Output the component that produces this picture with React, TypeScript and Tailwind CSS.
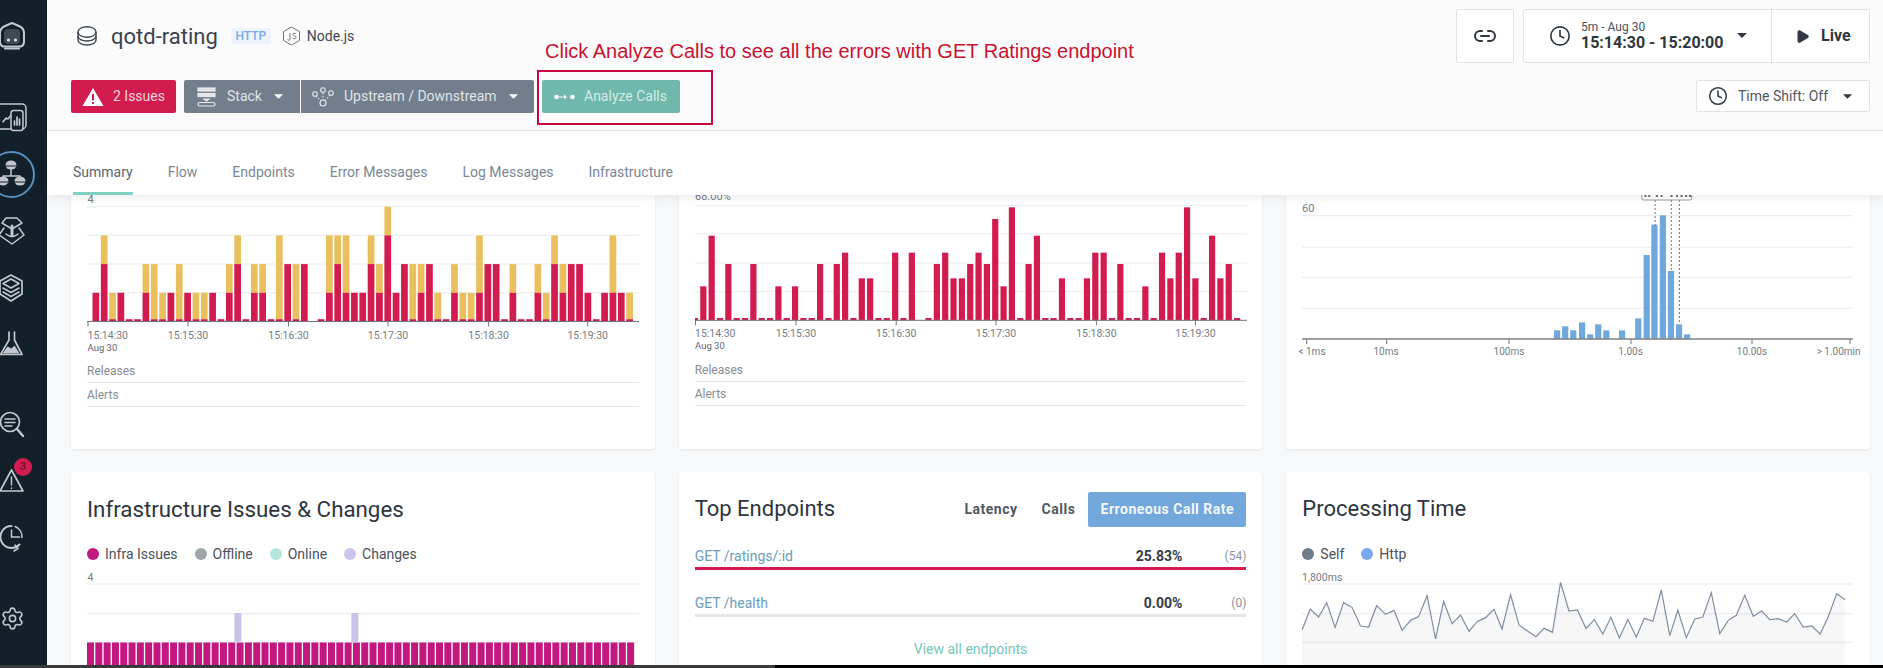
import React from "react";
import { Clock, Link2, Play, Settings } from "lucide-react";

const RED = "#d21c50";
const YEL = "#e9c05d";
const GRID = "#e9ebed";
const LABEL = "#757d86";

// chart 1 : [red, total] in grid units, 0.08 = the thin stub
const s = 0.08;
const errs: [number, number][] = [
  [1,1],[2,3],[s,1],[1,1],[s,s],[s,s],[1,2],[s,2],[s,1],[1,1],[s,2],[1,1],[s,1],[s,1],[1,1],[s,s],[1,2],[2,3],[s,s],[1,2],[1,2],[s,s],[s,3],[2,2],[s,2],[2,2],[0,0],[s,s],[1,3],[2,3],[1,3],[1,1],[1,1],[2,3],[1,2],[3,4],[1,1],[2,2],[s,2],[1,2],[2,2],[s,1],[s,s],[1,2],[s,1],[s,1],[1,3],[2,2],[2,2],[s,s],[1,2],[s,s],[s,s],[1,2],[s,1],[2,3],[1,2],[2,2],[2,2],[1,1],[s,s],[1,1],[1,3],[1,1],[s,1],
];
// chart 2 : bar top in page px, 0 = stub, -1 = none
const T = (z: number) => 190 + z / 3;
const rate = [0,289,137,0,222,0,0,222,0,0,289,0,289,0,0,222,0,222,188,0,265,265,0,0,188,0,188,-1,0,222,188,265,265,222,188,222,87,289,52,0,222,137,0,0,265,0,0,265,188,188,0,222,0,0,289,0,188,265,188,52,265,0,137,265,222,0];
// chart 3 : latency histogram [zoom x, zoom top]
const hist: [number, number][] = [[715,451],[736,439],[757,451],[780,427],[801,463],[822,433],[843,451],[884,451],[926,415],[948,225],[968,134],[990,106],[1011,273],[1032,433],[1053,463]];
const line: [number, number][] = [[60,510],[81,447],[103,471],[124,428],[146,502],[168,428],[190,442],[212,498],[233,501],[254,437],[277,463],[299,451],[320,511],[342,481],[363,470],[385,407],[407,537],[428,424],[450,491],[472,465],[494,514],[515,485],[537,473],[559,448],[580,507],[602,404],[624,495],[646,513],[668,530],[689,505],[711,517],[732,367],[754,453],[776,450],[798,505],[820,479],[842,522],[863,472],[885,534],[907,478],[929,531],[950,475],[972,484],[994,390],[1016,527],[1037,450],[1059,533],[1081,477],[1102,471],[1124,398],[1146,521],[1168,481],[1189,466],[1211,406],[1233,469],[1255,453],[1276,479],[1298,476],[1320,486],[1341,461],[1363,501],[1385,498],[1407,522],[1428,470],[1450,401],[1472,419]];

function Caret({ color = "#fff", w = 9 }: { color?: string; w?: number }) {
  return (
    <svg width={w} height={5} viewBox="0 0 10 5" className="shrink-0">
      <path d="M0 0h10L5 5z" fill={color} />
    </svg>
  );
}

function TimeAxis({ ticks, y, left }: { ticks: number[]; y: number; left: number }) {
  const labels = ["15:14:30", "15:15:30", "15:16:30", "15:17:30", "15:18:30", "15:19:30"];
  return (
    <g fontSize="10.5" fill={LABEL}>
      {ticks.map((t, i) => (
        <g key={t}>
          <line x1={t} x2={t} y1={y} y2={y + 5} stroke="#6f757b" strokeWidth="1" />
          <text x={i === 0 ? left : t} y={y + 17} textAnchor={i === 0 ? "start" : "middle"}>{labels[i]}</text>
        </g>
      ))}
      <text x={left} y={y + 29} fontSize="9.5" fill="#5f666e">Aug 30</text>
    </g>
  );
}

function ErrorsChart() {
  const axis = 321.5;
  const u = 28.7;
  return (
    <svg width={552} height={164} viewBox="87 195 552 164" className="block">
      <text x="87.5" y="203" fontSize="11" fill={LABEL}>4</text>
      {[206.7, 235.2, 264, 292.7].map((y) => (
        <line key={y} x1="87" x2="639" y1={y} y2={y} stroke={GRID} />
      ))}
      {errs.map(([r, t], i) => {
        const x = 92.5 + i * 8.34;
        return (
          <g key={i}>
            <rect x={x} width="6.7" y={axis - t * u} height={(t - r) * u} fill={YEL} />
            <rect x={x} width="6.7" y={axis - r * u} height={r * u} fill={RED} />
          </g>
        );
      })}
      <line x1="87" x2="639" y1={axis} y2={axis} stroke="#6f757b" />
      <TimeAxis ticks={[88, 188, 288.5, 388, 488.6, 587.7]} y={axis} left={87.5} />
    </svg>
  );
}

function RateChart() {
  const axis = 320.3;
  return (
    <svg width={552} height={163} viewBox="695 195 552 163" className="block">
      <text x="695" y="200" fontSize="11" fill={LABEL}>68.00%</text>
      {[205.3, 234, 263, 291.7].map((y) => (
        <line key={y} x1="695" x2="1247" y1={y} y2={y} stroke={GRID} />
      ))}
      {rate.map((v, i) => {
        if (v < 0) return null;
        const x = 691.9 + i * 8.34;
        const top = v === 0 ? axis - 2.3 : T(v);
        const lx = Math.max(x, 695);
        return <rect key={i} x={lx} width={x + 6.2 - lx} y={top} height={axis - top} fill={RED} />;
      })}
      <line x1="695" x2="1247" y1={axis} y2={axis} stroke="#6f757b" />
      <TimeAxis ticks={[695.5, 796, 896.2, 996, 1096.4, 1195.5]} y={axis} left={695} />
    </svg>
  );
}

function LatencyChart() {
  const axis = 339;
  const X = (z: number) => 1280 + z / 2.6;
  const Y = (z: number) => 180 + z / 3;
  const ticks: [number, number, string][] = [
    [1307.7, 1313, "< 1ms"], [1387.7, 1387, "10ms"], [1510, 1510, "100ms"],
    [1632, 1631.5, "1.00s"], [1753, 1753, "10.00s"], [1851, 1839.6, "> 1.00min"],
  ];
  return (
    <svg width={552} height={170} viewBox="1303 195 552 170" className="block overflow-visible">
      <text x="1303" y="212" fontSize="11" fill={LABEL}>60</text>
      {[215.7, 247.3, 277.3, 308.3].map((y) => (
        <line key={y} x1="1303" x2="1854" y1={y} y2={y} stroke={GRID} />
      ))}
      {hist.map(([z, t]) => (
        <rect key={z} x={X(z)} width="6.2" y={Y(t)} height={axis - Y(t)} fill="#6fa8dc" />
      ))}
      {[978, 1020, 1041].map((z) => (
        <line key={z} x1={X(z)} x2={X(z)} y1="200" y2={z === 978 ? 226 : z === 1020 ? 270 : 322} stroke="#6f757b" strokeDasharray="2 2" />
      ))}
      <rect x={X(943)} y="185" width={(1073 - 943) / 2.6} height="15" rx="2" fill="#fff" stroke="#9aa1a8" />
      {[950, 960, 980, 992, 1018, 1032, 1044, 1056, 1066].map((z) => (
        <rect key={z} x={X(z)} y="195" width="2" height="2" fill="#6a7178" />
      ))}
      <line x1="1303" x2="1854" y1={axis} y2={axis} stroke="#7d8287" strokeWidth="1.6" />
      {ticks.map(([x, lx, l]) => (
        <g key={l}>
          <line x1={x} x2={x} y1={axis} y2={axis + 5} stroke="#6f757b" />
          <text x={lx} y={axis + 16} textAnchor="middle" fontSize="10" fill={LABEL}>{l}</text>
        </g>
      ))}
    </svg>
  );
}

function InfraChart() {
  return (
    <svg width={552} height={101} viewBox="87 564 552 101" className="block">
      <text x="87.5" y="580.5" fontSize="10.5" fill={LABEL}>4</text>
      {[584, 613.7, 642.3].map((y) => (
        <line key={y} x1="87" x2="639" y1={y} y2={y} stroke={GRID} />
      ))}
      {Array.from({ length: 66 }).map((_, i) => (
        <rect key={i} x={87 + i * 8.31} width="7" y="642.5" height="23" fill="#c2187f" />
      ))}
      <rect x="234.4" y="613" width="7" height="29.5" fill="#cdc3ea" />
      <rect x="351.4" y="613" width="7" height="29.5" fill="#cdc3ea" />
    </svg>
  );
}

function TimeChart() {
  const pts = line.map(([x, y]) => [1280 + x / 2.6, 460 + y / 3]);
  const p = pts.map((a) => a.join(",")).join(" ");
  return (
    <svg width={552} height={101} viewBox="1303 564 552 101" className="block">
      <text x="1303" y="580.5" fontSize="10.5" fill={LABEL}>1,800ms</text>
      {[584, 613.7, 642.3].map((y) => (
        <line key={y} x1="1303" x2="1854" y1={y} y2={y} stroke={GRID} />
      ))}
      <polygon points={`1303,665 ${p} ${pts[pts.length - 1][0]},665`} fill="#6f7c8c" fillOpacity="0.06" />
      <polyline points={p} fill="none" stroke="#7f8ea3" strokeWidth="1.2" />
    </svg>
  );
}

function Legend({ items }: { items: [string, string][] }) {
  return (
    <div className="flex items-center gap-[17px] h-[20px] text-[14px] text-[#4a525b]">
      {items.map(([c, l]) => (
        <div key={l} className="flex items-center gap-[6px]">
          <span className="w-[12px] h-[12px] rounded-full" style={{ background: c }} />
          <span>{l}</span>
        </div>
      ))}
    </div>
  );
}

function Rows() {
  return (
    <div className="text-[12px] text-[#858d96]">
      <div className="h-[24px] flex items-center border-b border-[#e3e6ea]">Releases</div>
      <div className="h-[24px] flex items-center border-b border-[#e3e6ea]">Alerts</div>
    </div>
  );
}

function Ep({ name, pct, n, bar, mt }: { name: string; pct: string; n: string; bar: string; mt: string }) {
  return (
    <div className={mt}>
      <div className="flex items-center h-[20px] text-[14px]">
        <span className="text-[#6a9dba]">{name}</span>
        <span className="ml-auto font-bold text-[#333b45]">{pct}</span>
        <span className="w-[64px] text-right text-[12px] text-[#8d949c]">{n}</span>
      </div>
      <div className={`h-[3px] mt-[1px] ${bar}`} />
    </div>
  );
}

const stroke = { fill: "none", stroke: "#c2c8cd", strokeWidth: 1.5, strokeLinejoin: "round" as const, strokeLinecap: "round" as const };
const LIGHT = "#c2c8cd";
const DARK = "#12202a";

function NavIcon({ children, mt = "" }: { children: React.ReactNode; mt?: string }) {
  return (
    <div className={`w-[24px] h-[36px] flex justify-center ${mt}`}>
      <svg width="36" height="36" viewBox="0 0 36 36" className="shrink-0 -mx-[6px]">
        <g {...stroke}>{children}</g>
      </svg>
    </div>
  );
}

export default function App() {
  return (
    <div className="w-[1883px] h-[668px] overflow-hidden flex flex-col bg-black font-['Roboto',sans-serif]">
      <div className="flex flex-1 min-h-0">
        <aside className="w-[47px] shrink-0 bg-[#12202a] pt-[18px] flex flex-col overflow-hidden relative">
          <NavIcon>
            <path d="M18 5l8 3.500q4 2 4 7V24q0 3-3 4.500H9Q6 27 6 24v-8.500q0-5 4-7z" strokeWidth="2" />
            <rect x="10" y="11" width="16" height="15" rx="4" fill="#3f4b54" stroke="none" />
            <circle cx="14.500" cy="22" r="1.600" fill="#dfe3e6" stroke="none" />
            <circle cx="21.500" cy="22" r="1.600" fill="#dfe3e6" stroke="none" />
            <path d="M11 30.500h14" strokeWidth="2" />
          </NavIcon>
          <NavIcon mt="mt-[46px]">
            <rect x="0" y="4" width="32" height="25" rx="4" />
            <path d="M9 22l3-4 2 1 3-4" />
            <rect x="17" y="10.500" width="12" height="20" rx="2.500" fill={DARK} />
            <path d="M20.500 25v-4M23 25v-8M25.500 25v-6" strokeWidth="1.700" />
          </NavIcon>
          <div className="relative mt-[21px]">
            <div className="absolute left-[-12px] top-[-6px] w-[47px] h-[47px] rounded-full border-[2.500px] border-[#5a8fc0]" />
            <NavIcon>
              <path d="M17 12v7M17 19H9v3M17 19h9v3" />
              <ellipse cx="17" cy="8" rx="5.500" ry="4.500" fill={LIGHT} stroke="none" />
              <ellipse cx="9" cy="24" rx="5.500" ry="4.500" fill={LIGHT} stroke="none" />
              <ellipse cx="26" cy="24" rx="5.500" ry="4.500" fill={LIGHT} stroke="none" />
              <path d="M11.500 9h11M3.500 25h11M20.500 25h11" stroke={DARK} strokeWidth="1" />
            </NavIcon>
          </div>
          <NavIcon mt="mt-[21px]">
            <path d="M12 4h11l5 5-10 6L8 9z" />
            <path d="M10 14l-5 7 13 9 12-9-5-7" />
            <path d="M18 12v9" strokeWidth="3" />
            <path d="M12 20q6 5 12 0" />
          </NavIcon>
          <NavIcon mt="mt-[20px]">
            <path d="M17 5l11 6v13l-11 7-11-7V11z" strokeWidth="1.700" />
            <path d="M17 9l8 4.500-8 4.500-8-4.500z" />
            <path d="M9 18l8 4.500 8-4.500M9 22l8 4.500 8-4.500" />
          </NavIcon>
          <NavIcon mt="mt-[19px]">
            <path d="M15 7v8L6.500 29.500H28L20.500 15V7" strokeWidth="1.700" />
            <path d="M8.500 28.500l5-7 4 2 3-3 5 8z" fill={LIGHT} stroke="none" />
          </NavIcon>
          <NavIcon mt="mt-[43px]">
            <circle cx="16" cy="18" r="9.500" strokeWidth="1.700" />
            <path d="M11 15h10M11 18.500h10M11 22h7" />
            <path d="M23 25l6 7" strokeWidth="2.400" />
          </NavIcon>
          <div className="relative mt-[22px]">
            <NavIcon>
              <path d="M17.500 8L29 29H6z" strokeWidth="1.700" />
              <path d="M17.500 15v8M17.500 26v.5" />
            </NavIcon>
            <div className="absolute left-[14px] top-[-4px] w-[18px] h-[18px] rounded-full bg-[#d21c50] text-[11px] font-bold text-[#7a1230] flex items-center justify-center">3</div>
          </div>
          <NavIcon mt="mt-[21px]">
            <path d="M17.500 7a11 11 0 1 0 8 18.500" strokeWidth="2" />
            <path d="M21 7.500a11 11 0 0 1 7 11" />
            <path d="M17.500 18h8" strokeWidth="1.500" />
            <path d="M17.500 18v-7" strokeWidth="1.500" />
            <path d="M20 32l4-2.500-3-3.500" />
          </NavIcon>
          <div className="mt-[45px] w-[24px] h-[36px] flex items-center justify-center">
            <Settings size={25} strokeWidth={1.5} color="#c2c8cd" className="shrink-0" />
          </div>
        </aside>

        <div className="flex-1 min-w-0 flex flex-col relative">
          {/* annotation over the page */}
          <div className="absolute left-[498px] top-[39px] z-20 text-[20px] leading-[24px] text-[#c9112f] font-['Liberation_Sans',sans-serif] whitespace-nowrap">
            Click Analyze Calls to see all the errors with GET Ratings endpoint
          </div>
          <div className="absolute left-[490px] top-[70px] z-20 w-[176px] h-[55px] border-2 border-[#c8073f]" />

          <header className="h-[131px] shrink-0 bg-[#fbfbfc] border-b border-[#e6e8eb] flex justify-between pl-[24px] pr-[13px]">
            <div className="flex flex-col">
              <div className="flex items-center h-[40px] mt-[16px] pl-[6px]">
                <svg width="20" height="20" viewBox="0 0 20 20" fill="none" stroke="#3b444e" strokeWidth="1.4">
                  <ellipse cx="10" cy="6" rx="9" ry="5.300" />
                  <path d="M1 6v8c0 3 4 5 9 5s9-2 9-5V6" />
                  <path d="M1 10c0 3 4 5 9 5s9-2 9-5" />
                </svg>
                <span className="ml-[14px] text-[22px] text-[#39424c]">qotd-rating</span>
                <span className="ml-[13px] h-[16px] w-[40px] rounded-[2px] bg-[#eef4fd] text-[#7aa7ee] text-[12px] font-medium flex items-center justify-center">HTTP</span>
                <svg width="19" height="20" viewBox="0 0 19 20" fill="none" stroke="#6d7680" strokeWidth="1" className="ml-[11px]">
                  <path d="M9.500 1l8 4.500v9l-8 4.500-8-4.500v-9z" />
                  <path d="M8 7v6c0 1.500-2 1.500-2.500.5M14 8c-.7-1.200-3.200-1-3 .6.2 1.400 3.200 1 3 3-.2 1.500-2.800 1.500-3.300.2" />
                </svg>
                <span className="ml-[6px] text-[14px] text-[#3f4852]">Node.js</span>
              </div>
              <div className="flex items-center h-[33px] mt-[24px] text-[14px] leading-[35px]">
                <div className="w-[105px] h-full bg-[#d21c50] rounded-[2px] flex items-center pl-[11px] gap-[9px] text-[#f6d3dd]">
                  <svg width="22" height="20" viewBox="0 0 22 20">
                    <path d="M11 1l10.500 18H.5z" fill="#fff" />
                    <rect x="10" y="7" width="2" height="6.500" fill="#d21c50" />
                    <rect x="10" y="15" width="2" height="2" fill="#d21c50" />
                  </svg>
                  <span>2 Issues</span>
                </div>
                <div className="ml-[8px] w-[116px] h-full bg-[#737e8c] rounded-l-[2px] flex items-center pl-[13px] text-[#dfe3e7]">
                  <svg width="19" height="20" viewBox="0 0 19 20" fill="none" stroke="#e4e7ea" strokeWidth="1.200">
                    <rect x="1" y="1" width="17" height="3" fill="#e4e7ea" />
                    <rect x="1" y="6.500" width="17" height="3" fill="#e4e7ea" />
                    <path d="M7 12h5l-2.500 2z" fill="#e4e7ea" />
                    <rect x="1" y="15.500" width="17" height="3.500" rx="1.700" />
                  </svg>
                  <span className="ml-[11px]">Stack</span>
                  <span className="ml-[12px]"><Caret /></span>
                </div>
                <div className="ml-[1px] w-[233px] h-full bg-[#737e8c] rounded-r-[2px] flex items-center pl-[11px] text-[#dfe3e7]">
                  <svg width="22" height="20" viewBox="0 0 22 20" fill="none" stroke="#e4e7ea" strokeWidth="1.100">
                    <circle cx="3" cy="7" r="2.300" />
                    <circle cx="11" cy="3" r="2.300" />
                    <circle cx="19" cy="6" r="2.300" />
                    <circle cx="11" cy="16" r="3" />
                    <path d="M4 9l5 5M11 6v7M18 8l-5 6" strokeDasharray="1.500 1.500" />
                  </svg>
                  <span className="ml-[10px]">Upstream / Downstream</span>
                  <span className="ml-[12px]"><Caret /></span>
                </div>
                <div className="ml-[8px] w-[138px] h-full bg-[#6fb8ab] rounded-[2px] flex items-center pl-[12px] text-[#d3ebe6]">
                  <svg width="21" height="8" viewBox="0 0 21 8" fill="#fff">
                    <circle cx="2.500" cy="4" r="2.300" />
                    <circle cx="18.500" cy="4" r="2.300" />
                    <path d="M5 3.400h5V1.500l3 2.500-3 2.500V4.600H5z" />
                  </svg>
                  <span className="ml-[9px]">Analyze Calls</span>
                </div>
              </div>
            </div>
            <div className="flex flex-col items-end pt-[9px]">
              <div className="flex h-[54px]">
                <div className="w-[58px] h-full bg-white border border-[#e1e4e7] rounded-[2px] flex items-center justify-center">
                  <Link2 size={24} strokeWidth={2} color="#2f3740" />
                </div>
                <div className="ml-[9px] w-[249px] h-full bg-white border border-[#e1e4e7] rounded-l-[2px] flex items-center pl-[25px]">
                  <Clock size={22} strokeWidth={1.800} color="#2f3740" className="shrink-0" />
                  <div className="ml-[10px] flex flex-col">
                    <span className="text-[12px] leading-[14px] text-[#4a525b]">5m - Aug 30</span>
                    <span className="text-[16px] leading-[18px] font-bold text-[#2f3740] whitespace-nowrap">15:14:30 - 15:20:00</span>
                  </div>
                  <span className="ml-[14px] mb-[2px]"><Caret color="#2f3740" w={10} /></span>
                </div>
                <div className="w-[98px] h-full bg-white border border-l-0 border-[#e1e4e7] rounded-r-[2px] flex items-center pl-[23px]">
                  <Play size={15} fill="#2f3740" color="#2f3740" />
                  <span className="ml-[11px] text-[16px] font-bold text-[#2f3740]">Live</span>
                </div>
              </div>
              <div className="mt-[17px] w-[174px] h-[32px] bg-white border border-[#e1e4e7] rounded-[2px] flex items-center pl-[11px]">
                <Clock size={20} strokeWidth={1.800} color="#2f3740" className="shrink-0" />
                <span className="ml-[10px] text-[14px] text-[#50585f] whitespace-nowrap">Time Shift: Off</span>
                <span className="ml-[15px]"><Caret color="#2f3740" w={9} /></span>
              </div>
            </div>
          </header>

          <nav className="relative z-10 h-[64px] shrink-0 bg-white shadow-[0_3px_10px_rgba(0,0,0,0.07)] pl-[26px] flex gap-[35px] text-[14px] text-[#7b8794]">
            <div className="h-full flex items-center pt-[21px] border-b-[3px] border-[#7fd1c4] text-[#5b6672]">Summary</div>
            {["Flow", "Endpoints", "Error Messages", "Log Messages", "Infrastructure"].map((t) => (
              <div key={t} className="h-full flex items-center pt-[21px] border-b-[3px] border-transparent">{t}</div>
            ))}
          </nav>

          <main className="flex-1 min-h-0 overflow-hidden bg-[#f7f8fa] pl-[24px] pr-[13px] grid grid-cols-3 gap-x-[24px] gap-y-[23px] grid-rows-[254px_1fr]">
            <section className="bg-white rounded-b-[4px] shadow-[0_1px_3px_rgba(0,0,0,0.08)] px-[16px]">
              <ErrorsChart />
              <Rows />
            </section>
            <section className="bg-white rounded-b-[4px] shadow-[0_1px_3px_rgba(0,0,0,0.08)] px-[16px]">
              <RateChart />
              <Rows />
            </section>
            <section className="bg-white rounded-b-[4px] shadow-[0_1px_3px_rgba(0,0,0,0.08)] px-[16px] overflow-hidden">
              <LatencyChart />
            </section>

            <section className="bg-white rounded-t-[4px] shadow-[0_1px_3px_rgba(0,0,0,0.08)] px-[16px] overflow-hidden">
              <h2 className="pt-[22px] h-[72px] text-[22.300px] leading-[30px] font-normal text-[#2d3540] whitespace-nowrap">Infrastructure Issues &amp; Changes</h2>
              <Legend items={[["#c2187f", "Infra Issues"], ["#9fa6a8", "Offline"], ["#b5e5dc", "Online"], ["#cdc3ea", "Changes"]]} />
              <InfraChart />
            </section>
            <section className="bg-white rounded-t-[4px] shadow-[0_1px_3px_rgba(0,0,0,0.08)] px-[16px] overflow-hidden">
              <div className="flex items-start pt-[20px] h-[70px]">
                <h2 className="pt-[2px] text-[22px] leading-[30px] font-normal text-[#2d3540]">Top Endpoints</h2>
                <div className="ml-auto flex items-center text-[14px] font-bold text-[#4f5963] tracking-[0.5px]">
                  <span>Latency</span>
                  <span className="ml-[24px]">Calls</span>
                  <span className="ml-[13px] h-[35px] w-[158px] rounded-[2px] bg-[#72a8dc] text-[#f3f7fb] flex items-center justify-center">Erroneous Call Rate</span>
                </div>
              </div>
              <Ep name="GET /ratings/:id" pct="25.83%" n="(54)" bar="bg-[#d21c50]" mt="mt-[4px]" />
              <Ep name="GET /health" pct="0.00%" n="(0)" bar="bg-[#e3e6ea]" mt="mt-[23px]" />
              <div className="mt-[22px] text-center text-[14px] text-[#74c7bb]">View all endpoints</div>
            </section>
            <section className="bg-white rounded-t-[4px] shadow-[0_1px_3px_rgba(0,0,0,0.08)] px-[16px] overflow-hidden">
              <h2 className="pt-[22px] h-[72px] text-[22px] leading-[30px] font-normal text-[#2d3540]">Processing Time</h2>
              <Legend items={[["#6f7c8c", "Self"], ["#7aa7ee", "Http"]]} />
              <TimeChart />
            </section>
          </main>
        </div>
      </div>
      <div className="h-[3px] shrink-0 bg-black flex">
        <div className="w-[775px] h-full bg-[#3a3a3a]" />
      </div>
    </div>
  );
}
